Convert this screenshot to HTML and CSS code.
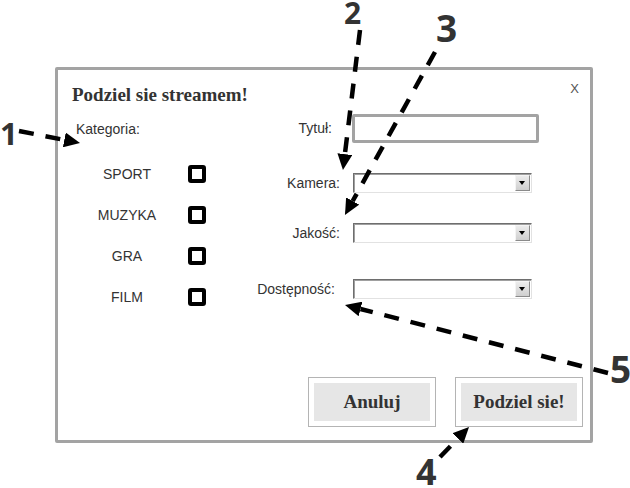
FILE: index.html
```html
<!DOCTYPE html>
<html lang="pl">

<head>
  <meta charset="UTF-8">
  <meta name="viewport" content="width=device-width, initial-scale=1.0">
  <title>Podziel sie streamem</title>
  <link rel="stylesheet" href="styles.css">
</head>

<body>
  <div class="dialog">
    <div class="dialog-head">
      <h1 class="dialog-title">Podziel sie streamem!</h1>
      <span class="dialog-close">X</span>
    </div>

    <div class="dialog-body">
      <div class="categories">
        <div class="categories-label">Kategoria:</div>
        <div class="category"><span class="category-name">SPORT</span><span class="check"></span></div>
        <div class="category"><span class="category-name">MUZYKA</span><span class="check"></span></div>
        <div class="category"><span class="category-name">GRA</span><span class="check"></span></div>
        <div class="category"><span class="category-name">FILM</span><span class="check"></span></div>
      </div>

      <div class="fields">
        <div class="field field-title">
          <label class="field-label">Tytuł:</label>
          <span class="text-input"></span>
        </div>
        <div class="field field-select">
          <label class="field-label">Kamera:</label>
          <span class="select"><span class="select-btn"></span></span>
        </div>
        <div class="field field-select">
          <label class="field-label">Jakość:</label>
          <span class="select"><span class="select-btn"></span></span>
        </div>
        <div class="field field-select field-last">
          <label class="field-label">Dostępność:</label>
          <span class="select"><span class="select-btn"></span></span>
        </div>
      </div>
    </div>

    <div class="dialog-foot">
      <div class="btn"><span class="btn-face">Anuluj</span></div>
      <div class="btn"><span class="btn-face">Podziel sie!</span></div>
    </div>
  </div>

  <!-- adnotacje -->
  <svg class="notes" width="630" height="488" viewBox="0 0 630 488">
    <defs>
      <marker id="head" markerUnits="userSpaceOnUse" markerWidth="16" markerHeight="15" refX="0" refY="7.5" orient="auto">
        <path d="M0,0 L16,7.5 L0,15 z" fill="#000" />
      </marker>
    </defs>
    <g stroke="#000" stroke-width="4.5" stroke-dasharray="15 12" fill="none">
      <line x1="19" y1="131" x2="64.3" y2="139.9" marker-end="url(#head)" />
      <line x1="360" y1="30" x2="344.9" y2="154.1" marker-end="url(#head)" />
      <line x1="435" y1="52" x2="352.7" y2="201" marker-end="url(#head)" />
      <line x1="608" y1="373" x2="360.5" y2="309" marker-end="url(#head)" />
      <line x1="440" y1="457" x2="457.9" y2="438.5" marker-end="url(#head)" />
    </g>
    <g class="note-num">
      <text x="0" y="145" font-size="31">1</text>
      <text x="344" y="24" font-size="30">2</text>
      <text x="436" y="42" font-size="37">3</text>
      <text x="610" y="383" font-size="37">5</text>
      <text x="416" y="485" font-size="36">4</text>
    </g>
  </svg>
</body>

</html>
```

FILE: styles.css
```css
body {
  margin: 0;
  width: 630px;
  height: 488px;
  position: relative;
  overflow: hidden;
  background: #fff;
  font-family: "Liberation Sans", Arial, sans-serif;
  color: #333;
}

.dialog {
  display: flex;
  flex-direction: column;
  box-sizing: border-box;
  width: 538px;
  height: 376px;
  margin: 67px 0 0 55px;
  border: 3px solid #a3a3a3;
  border-radius: 2px;
}

.dialog-head {
  display: flex;
  justify-content: space-between;
  align-items: flex-start;
  height: 36px;
}

.dialog-title {
  margin: 14px 0 0 14px;
  font-family: "Liberation Serif", "Times New Roman", serif;
  font-size: 19px;
  line-height: 22px;
  font-weight: bold;
  color: #333;
}

.dialog-close {
  margin: 11px 11px 0 0;
  font-size: 13px;
  line-height: 16px;
  color: #555;
}

.dialog-body {
  display: flex;
}

.categories {
  width: 196px;
}

.categories-label {
  margin: 15px 0 0 18px;
  font-size: 14px;
  line-height: 17px;
}

.category {
  display: flex;
  align-items: center;
  height: 24px;
  margin-top: 17px;
  padding-left: 29px;
  font-size: 14px;
}

.categories-label + .category {
  margin-top: 24px;
}

.category-name {
  width: 80px;
  text-align: center;
}

.check {
  box-sizing: border-box;
  width: 18px;
  height: 18px;
  margin-left: 21px;
  border: 4px solid #000;
  border-radius: 3px;
}

.field {
  display: flex;
  align-items: center;
  margin-top: 30px;
}

.field-title {
  margin-top: 8px;
}

.field-last {
  margin-top: 36px;
}

.field-label {
  box-sizing: border-box;
  width: 86px;
  margin-right: 12px;
  font-size: 14px;
  line-height: 17px;
  text-align: right;
  white-space: nowrap;
}

.field-title .field-label {
  padding-right: 8px;
}

.field-last .field-label {
  padding-right: 5px;
}

.text-input {
  box-sizing: border-box;
  width: 187px;
  height: 29px;
  border: 3px solid #a3a3a3;
  border-radius: 2px;
}

.select {
  display: flex;
  justify-content: flex-end;
  align-items: center;
  box-sizing: border-box;
  width: 179px;
  height: 20px;
  margin-left: 1px;
  padding-right: 1px;
  border: 1px solid;
  border-color: #6e6e6e #e2e2e2 #e2e2e2 #6e6e6e;
  box-shadow: inset 1px 1px 0 #a0a0a0;
}

.select-btn {
  position: relative;
  box-sizing: border-box;
  width: 15px;
  height: 16px;
  border: 1px solid #8a8a8a;
  border-top-color: #f4f4f4;
  border-left-color: #f4f4f4;
  background: linear-gradient(#ececec, #cfcfcf);
}

.select-btn::after {
  content: "";
  position: absolute;
  left: 3px;
  top: 5px;
  border-left: 3.5px solid transparent;
  border-right: 3.5px solid transparent;
  border-top: 4px solid #000;
}

.dialog-foot {
  display: flex;
  justify-content: flex-end;
  gap: 19px;
  margin-top: auto;
  padding: 0 7px 13px 0;
}

.btn {
  padding: 5px;
  border: 1px solid #b4b4b4;
  background: #fff;
}

.btn-face {
  display: flex;
  justify-content: center;
  align-items: center;
  width: 116px;
  height: 38px;
  background: #e6e6e6;
  font-family: "Liberation Serif", "Times New Roman", serif;
  font-size: 19px;
  font-weight: bold;
  color: #333;
}

.notes {
  position: absolute;
  top: 0;
  left: 0;
  pointer-events: none;
}

.note-num {
  font-family: "Open Sans", "DejaVu Sans", sans-serif;
  font-weight: bold;
  fill: #333;
}
```
